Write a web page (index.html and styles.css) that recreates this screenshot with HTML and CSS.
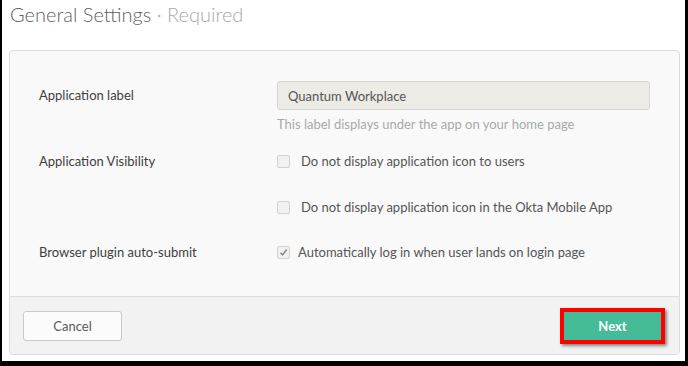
FILE: index.html
```html
<!DOCTYPE html>
<html>
<head>
  <meta charset="UTF-8">
  <title>General Settings</title>
  <link rel="stylesheet" href="styles.css">
</head>
<body>
<div class="frame">
  <h1 class="title">General Settings <span class="sub">&middot; Required</span></h1>

  <div class="panel">
    <div class="panel-body">
      <div class="row row-label">
        <div class="label">Application label</div>
        <div class="field">
          <div class="text-input">Quantum Workplace</div>
          <div class="help">This label displays under the app on your home page</div>
        </div>
      </div>

      <div class="row row-visibility">
        <div class="label">Application Visibility</div>
        <div class="field">
          <label class="option"><span class="check"></span>Do not display application icon to users</label>
          <label class="option option-mobile"><span class="check"></span>Do not display application icon in the Okta Mobile App</label>
        </div>
      </div>

      <div class="row row-submit">
        <div class="label">Browser plugin auto-submit</div>
        <div class="field">
          <label class="option option-checked"><span class="check checked"><svg width="9" height="9" viewBox="0 0 9 9"><path d="M1.5 4.8 L3.6 6.9 L7.6 1.6" fill="none" stroke="#8a8a8a" stroke-width="1.6"/></svg></span>Automatically log in when user lands on login page</label>
        </div>
      </div>
    </div>

    <div class="panel-footer">
      <button class="btn btn-cancel">Cancel</button>
      <button class="btn btn-next">Next</button>
    </div>
  </div>
</div>
</body>
</html>
```

FILE: styles.css
```css
body {
  margin: 0;
  padding: 0;
  background: #fff;
  font-family: "Lato", "Liberation Sans", sans-serif;
}
.frame {
  box-sizing: border-box;
  width: 688px;
  height: 366px;
  border-style: solid;
  border-color: #000;
  border-width: 0 3px 5px 2px;
  background: #fff;
  overflow: hidden;
}
.title {
  margin: 0;
  padding: 1px 0 0 8px;
  height: 47px;
  font-size: 20px;
  font-weight: 300;
  line-height: 26px;
  color: #5f5f5f;
}
.title .sub { color: #a8a8a8; }

.panel {
  margin: 2px 0 0 7px;
  width: 671px;
  box-sizing: border-box;
  border: 1px solid #dcdcdc;
  border-radius: 4px;
  background: #f9f9f9;
}
.panel-body {
  padding: 30px 0 36px 29px;
}
.row {
  display: flex;
}
.label {
  width: 238px;
  font-size: 13px;
  color: #3e3e3e;
  line-height: 16px;
}
.field { flex: 1; }

.row-label .label { padding-top: 6px; }
.text-input {
  box-sizing: border-box;
  width: 373px;
  height: 29px;
  padding: 6px 10px;
  border: 1px solid #d6d5cf;
  border-radius: 3px;
  background: #ecebe5;
  font-size: 13px;
  line-height: 16px;
  color: #555;
}
.help {
  margin-top: 6px;
  font-size: 13px;
  line-height: 16px;
  color: #a9a9a9;
}

.row-visibility { margin-top: 21px; }
.row-submit { margin-top: 29px; }

.option {
  display: flex;
  align-items: center;
  font-size: 13px;
  line-height: 16px;
  color: #555;
}
.option-mobile { margin-top: 30px; }
.check {
  box-sizing: border-box;
  width: 13px;
  height: 13px;
  margin-right: 11px;
  border: 1px solid #d2d2d2;
  border-radius: 2px;
  background: #f1f1f1;
  display: flex;
  align-items: center;
  justify-content: center;
}
.option-checked .check { margin-right: 8px; }

.panel-footer {
  display: flex;
  justify-content: space-between;
  align-items: center;
  height: 57px;
  padding: 0 14px 0 13px;
  border-top: 1px solid #dedede;
  background: #f2f2f2;
  border-radius: 0 0 4px 4px;
}
.btn {
  font-family: inherit;
  font-size: 13px;
  cursor: pointer;
}
.btn-cancel {
  width: 99px;
  height: 30px;
  border: 1px solid #c9c9c9;
  border-radius: 3px;
  background: #fbfbfb;
  color: #5a5a5a;
}
.btn-next {
  width: 105px;
  height: 36px;
  border: 4px solid #f00;
  background: #45bc97;
  color: #fff;
  font-weight: bold;
  box-shadow: 2px 2px 3px rgba(0, 0, 0, 0.45);
}
```
